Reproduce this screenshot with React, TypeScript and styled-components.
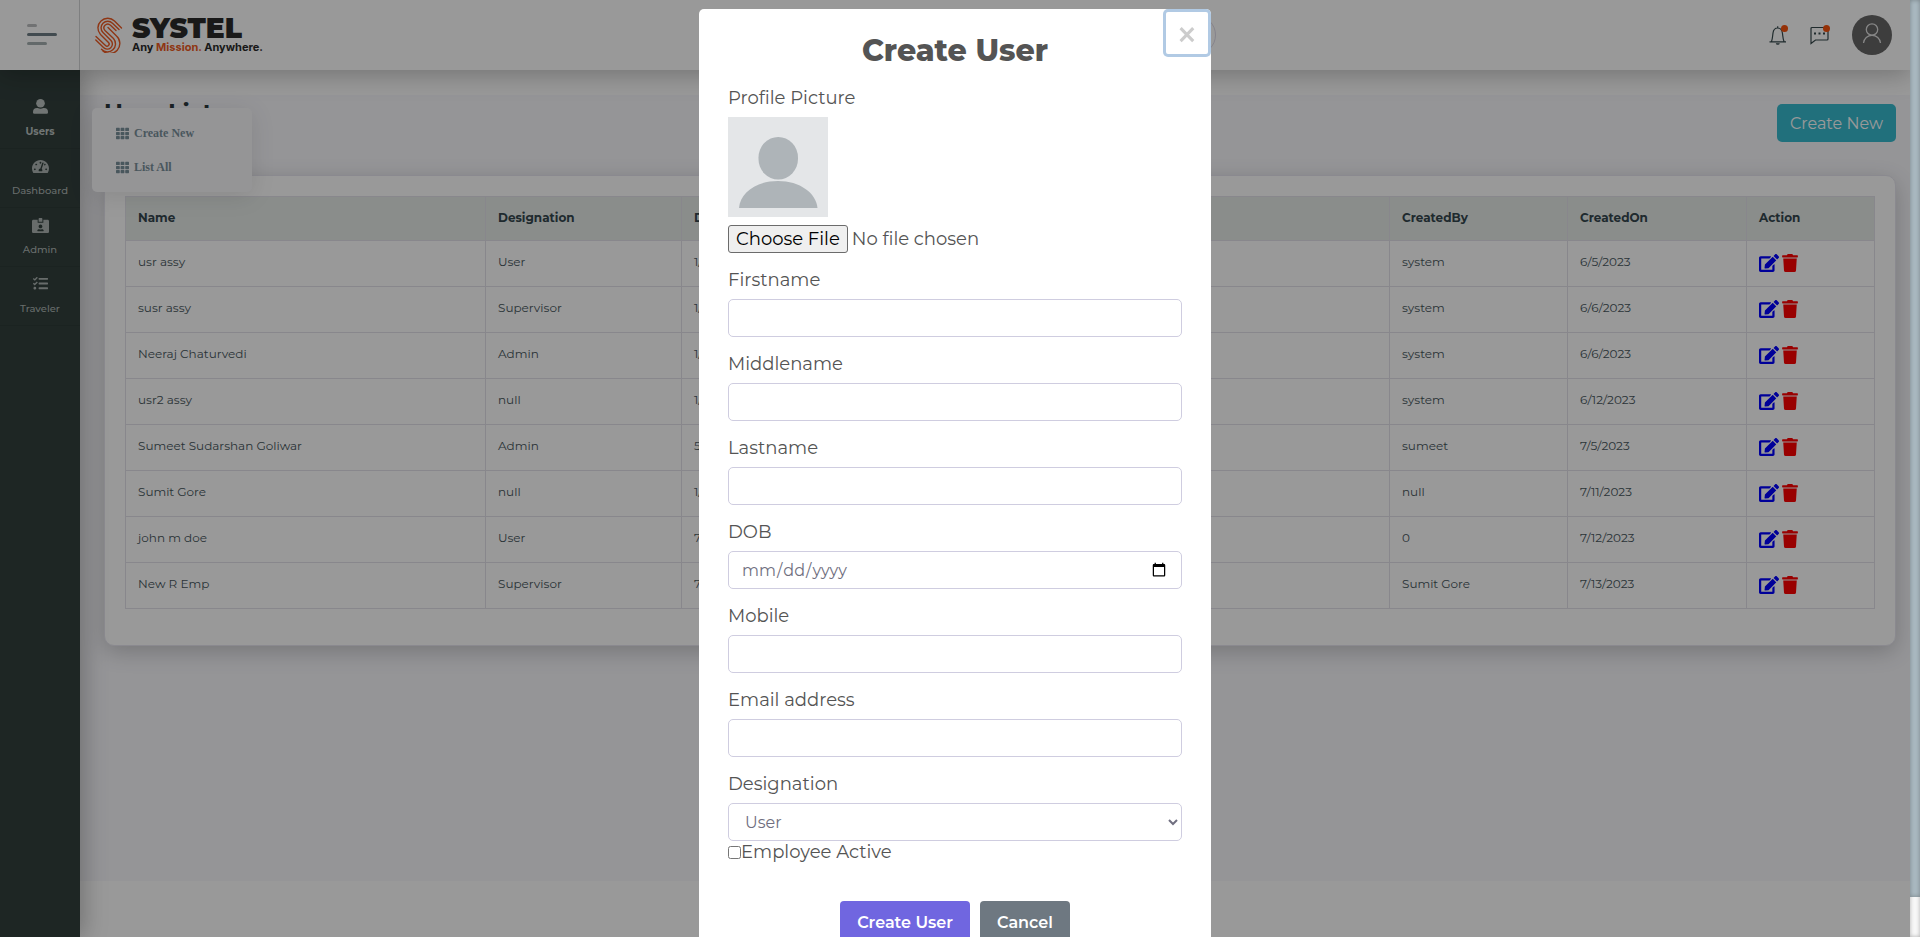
import React from 'react';
import styled, { createGlobalStyle } from 'styled-components';
import { FaEdit, FaIdCardAlt, FaTachometerAlt, FaTasks, FaTh, FaTrash } from 'react-icons/fa';

const GlobalStyle = createGlobalStyle`
  *, *::before, *::after { box-sizing: border-box; }
  body {
    margin: 0;
    background: #fff;
    font-family: Montserrat, "Open Sans", sans-serif;
    color: #47565c;
  }
  button, input, select { font-family: inherit; }
`;

const Page = styled.div`
  display: flex;
  flex-direction: column;
  height: 100vh;
  padding-right: 10px;
  overflow: hidden;
`;

const Header = styled.header`
  position: relative;
  z-index: 2;
  flex: none;
  display: grid;
  grid-template-columns: 80px 1fr 442px 1fr;
  align-items: center;
  height: 70px;
  background: #fff;
  box-shadow: 0 4px 26px rgba(0, 0, 0, 0.26);
`;

const MenuToggle = styled.button`
  display: flex;
  flex-direction: column;
  justify-content: center;
  gap: 6px;
  align-self: stretch;
  padding: 0 0 2px 27px;
  border: 0;
  border-right: 1px solid #d2d4d6;
  background: none;
`;

const Bar = styled.span<{ $width: number; $color: string }>`
  width: ${(p) => p.$width}px;
  height: 3px;
  border-radius: 2px;
  background: ${(p) => p.$color};
`;

const Brand = styled.a`
  display: flex;
  align-items: center;
  gap: 9px;
  padding-left: 15px;
  color: #2b2b2b;
  text-decoration: none;
`;

const BrandText = styled.span`
  display: flex;
  flex-direction: column;
  padding-top: 2px;
`;

const BrandName = styled.span`
  font-size: 28px;
  font-weight: 900;
  line-height: 22px;
`;

const Tagline = styled.span`
  font-family: Inter, sans-serif;
  font-size: 11px;
  font-weight: 700;
  line-height: 16px;
`;

const Accent = styled.span`
  color: #ee5a22;
`;

const Search = styled.input`
  width: 100%;
  height: 40px;
  padding: 0 20px;
  border: 1px solid #dedbea;
  border-radius: 20px;
  background: transparent;
`;

const HeaderTools = styled.div`
  display: flex;
  align-items: center;
  justify-content: flex-end;
  gap: 22px;
  padding-right: 18px;
`;

const ToolButton = styled.button`
  position: relative;
  display: flex;
  padding: 0;
  border: 0;
  background: none;
  color: #36484c;
`;

const Dot = styled.span`
  position: absolute;
  top: 0;
  right: 0;
  width: 7px;
  height: 7px;
  border-radius: 50%;
  background: #f9520c;
`;

const ProfileButton = styled(ToolButton)`
  align-items: center;
  justify-content: center;
  width: 40px;
  height: 40px;
  border-radius: 50%;
  background: #666;
  color: #fff;
`;

const Body = styled.div`
  flex: 1;
  display: flex;
  min-height: 0;
`;

const Sidebar = styled.nav`
  position: relative;
  z-index: 1;
  flex: none;
  width: 80px;
  padding-top: 20px;
  background: #32403d;
  box-shadow: 4px 0 22px rgba(0, 0, 0, 0.26);
`;

const NavLink = styled.a<{ $active?: boolean }>`
  display: flex;
  flex-direction: column;
  align-items: center;
  justify-content: space-between;
  height: 59px;
  padding: 9px 0 8px;
  border-bottom: 1px solid #2e3b38;
  color: ${(p) => (p.$active ? '#bcc3c1' : '#adb5b3')};
  font-size: 10px;
  font-weight: ${(p) => (p.$active ? 700 : 500)};
  line-height: 16px;
  text-decoration: none;
`;

const SubMenu = styled.div`
  position: absolute;
  top: 38px;
  left: 92px;
  width: 160px;
  padding: 8px 0;
  border-radius: 5px;
  background: #f8f8fb;
  box-shadow: 0 4px 24px rgba(0, 0, 0, 0.1);
`;

const SubLink = styled.a`
  display: flex;
  align-items: center;
  gap: 5px;
  height: 34px;
  padding-left: 24px;
  color: #7b919c;
  font-family: "Liberation Serif", serif;
  font-size: 12px;
  font-weight: 700;
  text-decoration: none;
`;

const Main = styled.main`
  flex: 1;
  min-width: 0;
  margin: 25px 0 56px;
  padding: 0 14px 0 24px;
  background: #f8f8fc;
`;

const TitleRow = styled.div`
  display: flex;
  align-items: flex-start;
  justify-content: space-between;
  margin-bottom: 33px;
`;

const PageTitle = styled.h1`
  margin: 0;
  color: #2c393e;
  font-size: 24px;
  font-weight: 700;
  line-height: 36px;
`;

const CreateButton = styled.button`
  height: 38px;
  margin-top: 9px;
  padding: 0 13px;
  border: 0;
  border-radius: 5px;
  background: #38bbcf;
  color: #fff;
  font-size: 16px;
`;

const Card = styled.section`
  padding: 20px 20px 36px;
  border: 1px solid #e6e5ee;
  border-radius: 10px;
  background: #fff;
  box-shadow: 0 6px 22px rgba(0, 0, 0, 0.2);
`;

const Table = styled.table`
  width: 100%;
  border-collapse: collapse;
  table-layout: fixed;
  font-size: 12px;
`;

const HeadCell = styled.th<{ $width?: number }>`
  width: ${(p) => (p.$width ? `${p.$width}px` : 'auto')};
  height: 44px;
  padding: 0 12px 2px;
  border: 1px solid #e3e2ea;
  background: #e6ebe8;
  color: #34464e;
  font-weight: 700;
  text-align: left;
`;

const Cell = styled.td`
  height: 46px;
  padding: 0 12px 4px;
  border: 1px solid #e3e2ea;
`;

const ActionCell = styled(Cell)`
  padding-bottom: 2px;
`;

const Actions = styled.div`
  display: flex;
  align-items: center;
  gap: 2px;
`;

const IconButton = styled.button<{ $color: string }>`
  display: flex;
  padding: 0;
  border: 0;
  background: none;
  color: ${(p) => p.$color};
`;

const Overlay = styled.div`
  position: fixed;
  inset: 0;
  z-index: 10;
  display: flex;
`;

const Backdrop = styled.div`
  flex: 1;
  padding: 9px 10px 10px;
  overflow: auto;
  scrollbar-width: none;
  background: rgba(0, 0, 0, 0.4);
`;

const ScrollRail = styled.div`
  flex: none;
  width: 10px;
  height: 100%;
  padding-bottom: 40px;
  background: #f8f8f8;
  box-shadow: inset 0 0 4px rgba(0, 0, 0, 0.3);
`;

const ScrollThumb = styled.div`
  height: 100%;
  background: #abbac2;
  box-shadow: inset 0 0 5px rgba(0, 0, 0, 0.3);
`;

const Dialog = styled.div`
  position: relative;
  max-width: 512px;
  margin: 0 auto;
  padding: 24px 29px 24px;
  border-radius: 5px;
  background: #fff;
  color: #545454;
  font-size: 18px;
  line-height: 22px;
`;

const CloseButton = styled.button`
  position: absolute;
  top: 0;
  right: 0;
  width: 48px;
  height: 48px;
  padding: 3px 0 0;
  border: 0;
  border-radius: 5px;
  background: transparent;
  box-shadow: inset 0 0 0 3px #b1cae4;
  color: #ccc;
  font-size: 40px;
  font-weight: 500;
  line-height: 45px;
`;

const DialogTitle = styled.h2`
  margin: 0 0 18px;
  font-size: 30px;
  font-weight: 800;
  line-height: 36px;
  text-align: center;
`;

const Field = styled.div`
  display: flex;
  flex-direction: column;
  gap: 8px;
  margin-bottom: 16px;
`;

const FileInput = styled.input`
  height: 28px;
  color: inherit;
  font-size: 18px;

  &::file-selector-button {
    height: 28px;
    margin-right: 4px;
    padding: 1px 7px;
    border: 1px solid #6b6b6b;
    border-radius: 3px;
    background: #efefef;
    color: #000;
    font: inherit;
  }
`;

const TextInput = styled.input`
  width: 100%;
  height: 38px;
  padding: 6px 12px;
  border: 1px solid #cfcde0;
  border-radius: 5px;
  background: #fff;
  color: #706f80;
  font-size: 16px;
`;

const SelectInput = styled.select`
  width: 100%;
  height: 38px;
  padding: 6px 12px;
  border: 1px solid #cfcde0;
  border-radius: 5px;
  background: #fff;
  color: #706f80;
  font-size: 16px;
`;

const LastField = styled(Field)`
  margin-bottom: 0;
`;

const CheckLabel = styled.label`
  display: flex;
  align-items: center;

  input { width: 13px; height: 13px; margin: 0; }
`;

const DialogActions = styled.div`
  display: flex;
  justify-content: center;
  gap: 10px;
  margin-top: 38px;
`;

const DialogButton = styled.button<{ $color: string }>`
  height: 42px;
  padding: 0 17px;
  border: 0;
  border-radius: 4px;
  background: ${(p) => p.$color};
  color: #fff;
  font-size: 16px;
  font-weight: 600;
`;

const LogoMark = () => (
  <svg width="28" height="36" viewBox="0 0 28 36" fill="none" stroke="#ee5a22" strokeWidth="1.400" strokeLinecap="round">
    <path d="M26.500 11 L19.500 4 A9.500 9.500 0 0 0 6 4 A9.500 9.500 0 0 0 5.500 17.500 L13.500 25.500 A2 2 0 0 1 10.500 28.500 L1 19.500" />
    <path d="M24 12.500 L17.500 6.200 A6.800 6.800 0 0 0 8 6.200 A6.500 6.500 0 0 0 8 15.500 L16 23.500 A5 5 0 0 1 8.500 30.500 L.8 23" />
    <path d="M21 13.500 L15.500 8.300 A4 4 0 0 0 10 8.300 A3.800 3.800 0 0 0 10 13.500 L18.500 21.500 A8 8 0 0 1 6.500 32.200" />
    <path d="M13 10.500 L21.500 19 A10 10 0 0 1 8 34" />
  </svg>
);

const UserGlyph = () => (
  <svg width="15" height="15" viewBox="0 0 15 15" fill="currentColor">
    <circle cx="7.500" cy="4.300" r="4.300" />
    <path d="M0 13.500V13a4 4 0 0 1 4-4h.7a6 6 0 0 0 5.600 0h.7a4 4 0 0 1 4 4v.5a1.300 1.300 0 0 1-1.300 1.300H1.300A1.300 1.300 0 0 1 0 13.500Z" />
  </svg>
);

const BellIcon = () => (
  <svg width="20" height="20" viewBox="0 0 20 20" fill="none" stroke="currentColor" strokeWidth="1.200">
    <path d="M1.500 16.800H18M3.500 16.500C4.500 14 4.500 11.500 5 8c.4-3 2.200-5 4.700-5s4.300 2 4.700 5c.5 3.500.5 6 1.600 8.500M9.700 3V1.200" />
    <path d="M7.800 18.300a2 1.500 0 0 0 4 0Z" fill="currentColor" stroke="none" />
  </svg>
);

const ChatIcon = () => (
  <svg width="20" height="20" viewBox="0 0 20 20" fill="none" stroke="currentColor" strokeWidth="1.200">
    <path d="M1 18.500V3.500A1 1 0 0 1 2 2.500H17a1 1 0 0 1 1 1V14a1 1 0 0 1-1 1H5.500Z" />
    <path d="M4 8.500h2M8.500 8.500h2M13 8.500h2" strokeWidth="2" />
  </svg>
);

const PersonIcon = () => (
  <svg width="20" height="24" viewBox="0 0 20 24" fill="none" stroke="currentColor" strokeWidth="1.300" opacity=".8">
    <circle cx="10" cy="6.500" r="5.700" />
    <path d="M1.500 20C2 15.500 5.500 12.300 10 12.300S18 15.500 18.500 20" />
  </svg>
);

const AvatarPicture = () => (
  <svg width="100" height="100" viewBox="0 0 100 100" role="img" aria-label="Profile placeholder">
    <rect width="100" height="100" fill="#e4e6e8" />
    <rect x="30.500" y="20" width="39.500" height="42.500" rx="19.700" ry="20.500" fill="#aeb4b8" />
    <path d="M11 91C12 76 28 64 50 64S88 76 89.500 91Z" fill="#aeb4b8" />
  </svg>
);

const navItems = [
  { label: 'Users', icon: <UserGlyph />, active: true },
  { label: 'Dashboard', icon: <FaTachometerAlt size={17} /> },
  { label: 'Admin', icon: <FaIdCardAlt size={17} /> },
  { label: 'Traveler', icon: <FaTasks size={15} /> },
];

const columns = [
  { label: 'Name', width: 360 },
  { label: 'Designation', width: 196 },
  { label: 'DOB' },
  { label: 'CreatedBy', width: 178 },
  { label: 'CreatedOn', width: 179 },
  { label: 'Action', width: 128 },
];

const users = [
  ['usr assy', 'User', '1/1/2000', 'system', '6/5/2023'],
  ['susr assy', 'Supervisor', '1/1/2000', 'system', '6/6/2023'],
  ['Neeraj Chaturvedi', 'Admin', '1/1/2000', 'system', '6/6/2023'],
  ['usr2 assy', 'null', '1/1/2000', 'system', '6/12/2023'],
  ['Sumeet Sudarshan Goliwar', 'Admin', '5/1/2000', 'sumeet', '7/5/2023'],
  ['Sumit Gore', 'null', '1/1/2000', 'null', '7/11/2023'],
  ['john m doe', 'User', '7/1/2000', '0', '7/12/2023'],
  ['New R Emp', 'Supervisor', '7/1/2000', 'Sumit Gore', '7/13/2023'],
];

const fields = [
  { id: 'firstname', label: 'Firstname', type: 'text' },
  { id: 'middlename', label: 'Middlename', type: 'text' },
  { id: 'lastname', label: 'Lastname', type: 'text' },
  { id: 'dob', label: 'DOB', type: 'date' },
  { id: 'mobile', label: 'Mobile', type: 'tel' },
  { id: 'email', label: 'Email address', type: 'email' },
];

const CreateUserDialog = () => (
  <Dialog role="dialog" aria-modal="true" aria-labelledby="dialog-title">
    <CloseButton type="button" aria-label="Close">×</CloseButton>
    <DialogTitle id="dialog-title">Create User</DialogTitle>
    <form>
      <Field>
        <label htmlFor="picture">Profile Picture</label>
        <AvatarPicture />
        <FileInput id="picture" type="file" />
      </Field>
      {fields.map((f) => (
        <Field key={f.id}>
          <label htmlFor={f.id}>{f.label}</label>
          <TextInput id={f.id} type={f.type} />
        </Field>
      ))}
      <LastField>
        <label htmlFor="designation">Designation</label>
        <SelectInput id="designation" defaultValue="User">
          <option>User</option>
          <option>Supervisor</option>
          <option>Admin</option>
        </SelectInput>
      </LastField>
      <CheckLabel>
        <input type="checkbox" />
        Employee Active
      </CheckLabel>
      <DialogActions>
        <DialogButton type="button" $color="#7066e0">Create User</DialogButton>
        <DialogButton type="button" $color="#6e7881">Cancel</DialogButton>
      </DialogActions>
    </form>
  </Dialog>
);

export default function App() {
  return (
    <>
      <GlobalStyle />
      <Page>
        <Header>
          <MenuToggle type="button" aria-label="Toggle menu">
            <Bar $width={10} $color="#bcbfc0" />
            <Bar $width={30} $color="#6f7e85" />
            <Bar $width={20} $color="#a5b0b1" />
          </MenuToggle>
          <Brand href="#">
            <LogoMark />
            <BrandText>
              <BrandName>SYSTEL</BrandName>
              <Tagline>Any <Accent>Mission.</Accent> Anywhere.</Tagline>
            </BrandText>
          </Brand>
          <Search type="search" aria-label="Search" />
          <HeaderTools>
            <ToolButton type="button" aria-label="Notifications"><BellIcon /><Dot /></ToolButton>
            <ToolButton type="button" aria-label="Messages"><ChatIcon /><Dot /></ToolButton>
            <ProfileButton type="button" aria-label="Profile"><PersonIcon /></ProfileButton>
          </HeaderTools>
        </Header>
        <Body>
          <Sidebar>
            {navItems.map((n) => (
              <NavLink key={n.label} href="#" $active={n.active}>
                {n.icon}
                {n.label}
              </NavLink>
            ))}
            <SubMenu>
              <SubLink href="#"><FaTh size={13} />Create New</SubLink>
              <SubLink href="#"><FaTh size={13} />List All</SubLink>
            </SubMenu>
          </Sidebar>
          <Main>
            <TitleRow>
              <PageTitle>User List</PageTitle>
              <CreateButton type="button">Create New</CreateButton>
            </TitleRow>
            <Card>
              <Table>
                <thead>
                  <tr>
                    {columns.map((c) => (
                      <HeadCell key={c.label} $width={c.width}>{c.label}</HeadCell>
                    ))}
                  </tr>
                </thead>
                <tbody>
                  {users.map((row) => (
                    <tr key={row[0]}>
                      {row.map((value, i) => <Cell key={i}>{value}</Cell>)}
                      <ActionCell>
                        <Actions>
                          <IconButton type="button" aria-label="Edit" $color="#0000ff"><FaEdit size={20} /></IconButton>
                          <IconButton type="button" aria-label="Delete" $color="#ff0000"><FaTrash size={18} /></IconButton>
                        </Actions>
                      </ActionCell>
                    </tr>
                  ))}
                </tbody>
              </Table>
            </Card>
          </Main>
        </Body>
      </Page>
      <Overlay>
        <Backdrop>
          <CreateUserDialog />
        </Backdrop>
        <ScrollRail>
          <ScrollThumb />
        </ScrollRail>
      </Overlay>
    </>
  );
}
